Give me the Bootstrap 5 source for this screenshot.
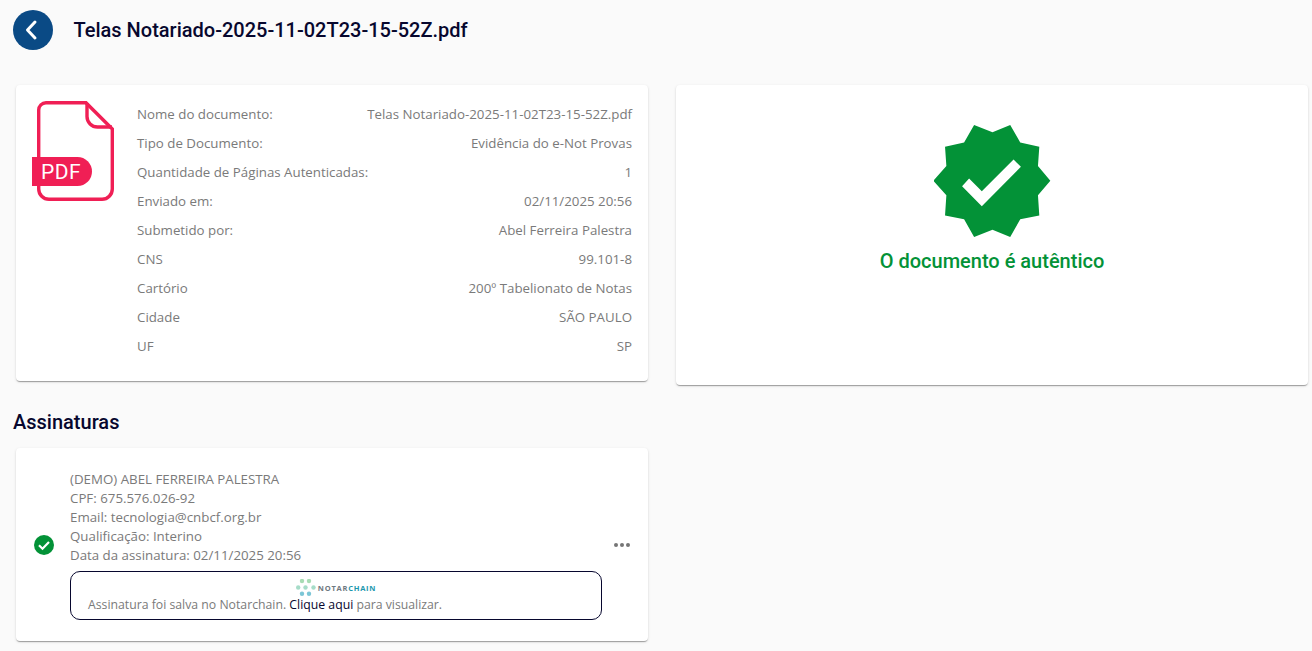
<!DOCTYPE html>
<html lang="pt-BR">
<head>
<meta charset="utf-8">
<title>Documento</title>
<link href="https://cdn.jsdelivr.net/npm/bootstrap@5.3.0/dist/css/bootstrap.min.css" rel="stylesheet">
<style>
html,body{height:651px;overflow:hidden}
body{background:#fafafa;font-family:"Open Sans",sans-serif;font-size:13.300px;color:#7a7a7a}
.page-top{height:60px;padding:10px 13px;gap:20.500px}
.back-btn{width:40px;height:40px;border-radius:50%;background:#0a4a85;border:0;padding:0}
.doc-title{font-family:Roboto,sans-serif;font-size:20px;font-weight:500;color:#07072e;margin:0;line-height:40px}
.cards-grid{display:grid;grid-template-columns:632px 632px;column-gap:28px;padding:25px 4px 0 16px;align-items:start}
.mat-card{border:0;border-radius:4px;background:#fff;box-shadow:0 2px 1px -1px rgba(0,0,0,.2),0 1px 1px 0 rgba(0,0,0,.14),0 1px 3px 0 rgba(0,0,0,.12)}
.info-card{height:296px;padding:16px 16px 0;gap:23px}
.info-row{height:29px;line-height:27px}
.pdf-icon{display:block;flex:none}
.info-list{flex:1;min-width:0}
.result-card{height:300px;padding-top:40px}
.result-text{font-family:Roboto,sans-serif;font-size:20px;font-weight:500;color:#039237;line-height:24px;margin:12px 0 0}
.section-title{font-family:Roboto,sans-serif;font-size:20px;font-weight:500;color:#07072e;margin:0;padding:25px 13px 0;line-height:24px;height:63px}
.sign-card{width:632px;height:193px;margin-left:16px;padding:0 0 0 18px}
.sign-lines{line-height:19px;width:532px;padding-top:1px}
.chain-box{height:49px;border:1px solid #07072e;border-radius:10px;margin-top:6px;font-size:12.250px;padding:7px 17px 0;line-height:17px}
.chain-logo{height:17px;gap:2px}
.chain-name{font-family:"Open Sans",sans-serif;font-size:7.500px;font-weight:700;letter-spacing:.75px;color:#6f7880;line-height:19px}
.chain-accent{color:#1c97ad}
.chain-link{color:#07072e;text-decoration:none}
.more-dots{gap:2px;margin-left:12px;height:4px}
.more-dots i{width:4px;height:4px;border-radius:50%;background:#757575;display:block}
.sign-side{width:36px}
</style>
</head>
<body>
<header class="page-top d-flex align-items-center">
  <button class="back-btn d-flex align-items-center justify-content-center" aria-label="Voltar">
    <svg width="40" height="40" viewBox="0 0 40 40"><path d="M22 12 14.500 20 22 28" fill="none" stroke="#fff" stroke-width="3" stroke-linecap="round" stroke-linejoin="round"/></svg>
  </button>
  <h1 class="doc-title">Telas Notariado-2025-11-02T23-15-52Z.pdf</h1>
</header>
<main>
  <div class="cards-grid">
    <section class="card mat-card info-card flex-row">
      <svg class="pdf-icon" width="82" height="100" viewBox="0 0 82 100">
        <path d="M14 1.700H54L80.300 28V88A10.300 10.300 0 0 1 70 98.300H17A10.300 10.300 0 0 1 6.700 88V9A7.300 7.300 0 0 1 14 1.700Z" fill="none" stroke="#f01f55" stroke-width="3.400"/>
        <path d="M55 2V15.500A10.500 10.500 0 0 0 65.500 26H80" fill="none" stroke="#f01f55" stroke-width="3.400"/>
        <path d="M0 56H45.500A14.500 14.500 0 0 1 45.500 85H0Z" fill="#f01f55"/>
        <text x="9" y="78" fill="#fff" font-family="Roboto,sans-serif" font-size="21" letter-spacing=".5">PDF</text>
      </svg>
      <div class="info-list">
        <div class="info-row d-flex justify-content-between"><span>Nome do documento:</span><span>Telas Notariado-2025-11-02T23-15-52Z.pdf</span></div>
        <div class="info-row d-flex justify-content-between"><span>Tipo de Documento:</span><span>Evidência do e-Not Provas</span></div>
        <div class="info-row d-flex justify-content-between"><span>Quantidade de Páginas Autenticadas:</span><span>1</span></div>
        <div class="info-row d-flex justify-content-between"><span>Enviado em:</span><span>02/11/2025 20:56</span></div>
        <div class="info-row d-flex justify-content-between"><span>Submetido por:</span><span>Abel Ferreira Palestra</span></div>
        <div class="info-row d-flex justify-content-between"><span>CNS</span><span>99.101-8</span></div>
        <div class="info-row d-flex justify-content-between"><span>Cartório</span><span>200º Tabelionato de Notas</span></div>
        <div class="info-row d-flex justify-content-between"><span>Cidade</span><span>SÃO PAULO</span></div>
        <div class="info-row d-flex justify-content-between"><span>UF</span><span>SP</span></div>
      </div>
    </section>
    <section class="card mat-card result-card align-items-center">
      <svg width="117" height="112" viewBox="102 45 350 335">
        <polygon fill="#039237" points="222,45 277,67 330,45 360,97 417,110 413,168 450,212 413,255 417,316 360,327 330,380 277,358 222,380 192,327 135,316 139,255 100,212 139,168 135,110 192,97"/>
        <polygon fill="#fff" points="186,228 207,205 245,243 340,148 362,170 245,288"/>
      </svg>
      <p class="result-text">O documento é autêntico</p>
    </section>
  </div>
  <h2 class="section-title">Assinaturas</h2>
  <section class="card mat-card sign-card flex-row align-items-center">
    <div class="sign-side">
      <svg class="d-block" width="20" height="20" viewBox="0 0 20 20"><circle cx="10" cy="10" r="10" fill="#039237"/><path d="M5 10.300 8.500 13.800 15 7" fill="none" stroke="#fff" stroke-width="2.200"/></svg>
    </div>
    <div class="sign-lines">
      <div>(DEMO) ABEL FERREIRA PALESTRA</div>
      <div>CPF: 675.576.026-92</div>
      <div>Email: tecnologia@cnbcf.org.br</div>
      <div>Qualificação: Interino</div>
      <div>Data da assinatura: 02/11/2025 20:56</div>
      <div class="chain-box">
        <div class="chain-logo d-flex justify-content-center">
          <svg width="20" height="17" viewBox="0 0 20 17">
            <g fill="#a8dcb4"><circle cx="6" cy="2" r="2.200"/><circle cx="13" cy="2" r="2.200"/></g>
            <g fill="#a6dcc8"><circle cx="2.200" cy="8.500" r="2.200"/><circle cx="9.500" cy="8.500" r="2.200"/><circle cx="17.500" cy="8.500" r="2.200"/></g>
            <g fill="#7cc6d6"><circle cx="6" cy="14.800" r="2.200"/><circle cx="13" cy="14.800" r="2.200"/></g>
          </svg>
          <span class="chain-name">NOTAR<span class="chain-accent">CHAIN</span></span>
        </div>
        Assinatura foi salva no Notarchain. <a class="chain-link" href="#">Clique aqui</a> para visualizar.
      </div>
    </div>
    <div class="more-dots d-flex"><i></i><i></i><i></i></div>
  </section>
</main>
</body>
</html>
